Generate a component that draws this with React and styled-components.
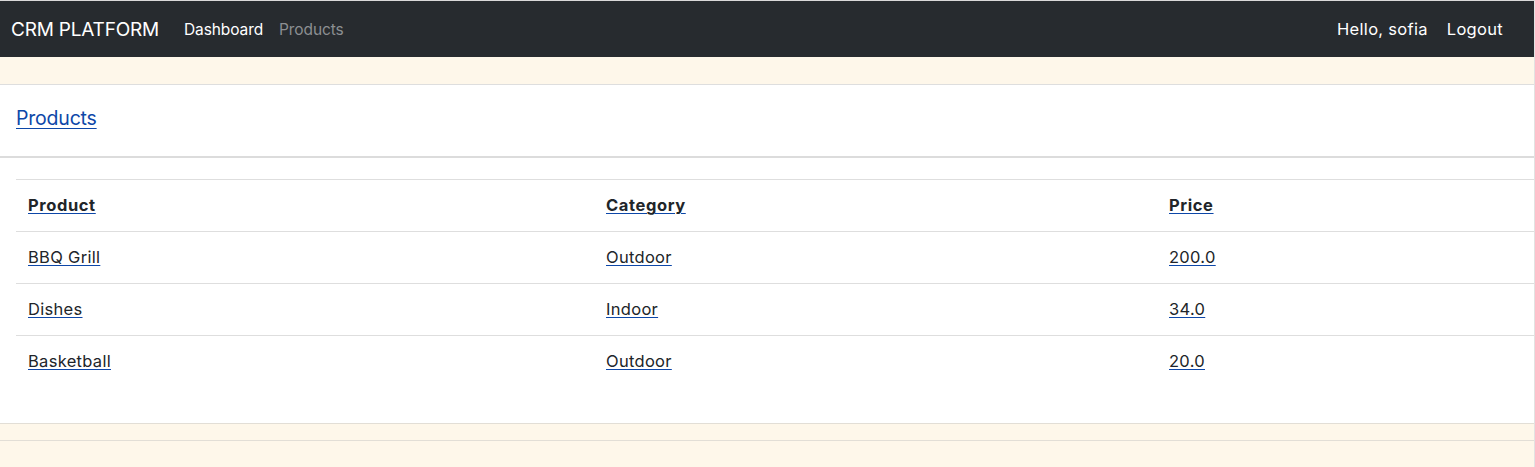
import React from "react";
import styled, { createGlobalStyle } from "styled-components";

const GlobalStyle = createGlobalStyle`
  html, body {
    margin: 0;
    padding: 0;
    background: #fef7ea;
  }
  body {
    font-family: "Inter", "Liberation Sans", sans-serif;
    font-size: 16px;
    color: #212529;
  }
  * {
    box-sizing: border-box;
  }
`;

const Page = styled.div`
  min-height: 467px;
  border-top: 1px solid #d9d9d9;
  border-right: 1px solid #e2e2e2;
  background: #fef7ea;
`;

const Navbar = styled.nav`
  height: 56px;
  background: #272b2f;
  display: flex;
  align-items: center;
  padding: 0 31px 0 11px;
`;

const Brand = styled.a`
  font-size: 19px;
  color: #ffffff;
  text-decoration: none;
  margin-right: 25px;
  letter-spacing: -0.2px;
`;

const NavLinks = styled.div`
  display: flex;
  gap: 16px;
  flex: 1;
`;

const NavLink = styled.a`
  font-size: ${(p) => (p.$user ? "16.5px" : "15.5px")};
  color: ${(p) => (p.$muted ? "#8c8f92" : "#ffffff")};
  text-decoration: none;
  letter-spacing: ${(p) => (p.$user ? "0.3px" : "-0.1px")};
`;

const UserArea = styled.div`
  display: flex;
  gap: 19px;
`;

const Spacer = styled.div`
  height: 27px;
`;

const Card = styled.section`
  background: #ffffff;
  border-top: 1px solid #dedede;
  border-bottom: 1px solid #e2ded6;
`;

const CardHeader = styled.header`
  height: 73px;
  display: flex;
  align-items: center;
  padding: 0 16px 6px;
  border-bottom: 2px solid #dcdcdc;
`;

const HeaderLink = styled.a`
  font-size: 19.5px;
  color: #0d47a8;
  text-decoration: underline;
  text-underline-offset: 3px;
  letter-spacing: -0.2px;
`;

const CardBody = styled.div`
  padding: 21px 0 35px 16px;
`;

const Table = styled.table`
  width: 100%;
  border-collapse: collapse;
  border-top: 1px solid #dedede;
`;

const Cell = styled.td`
  height: 52px;
  padding: 0 12px 1px;
  vertical-align: middle;
  text-align: left;
  font-size: 16.5px;
  letter-spacing: 0.3px;
  border-bottom: ${(p) => (p.$last ? "none" : "1px solid #dedede")};
  width: ${(p) => p.$width || "auto"};
`;

const HeadCell = styled(Cell).attrs({ as: "th" })`
  font-weight: 700;
  letter-spacing: 0.6px;
`;

const CellLink = styled.a`
  color: #212529;
  text-decoration: underline;
  text-decoration-color: #0d47a8;
  text-decoration-thickness: 1px;
  text-underline-offset: 2px;
`;

const Footer = styled.div`
  height: 17px;
  border-bottom: 1px solid #e2ded6;
`;

const products = [
  { name: "BBQ Grill", category: "Outdoor", price: "200.0" },
  { name: "Dishes", category: "Indoor", price: "34.0" },
  { name: "Basketball", category: "Outdoor", price: "20.0" },
];

export default function App() {
  return (
    <Page>
      <GlobalStyle />
      <Navbar>
        <Brand href="#">CRM PLATFORM</Brand>
        <NavLinks>
          <NavLink href="#">Dashboard</NavLink>
          <NavLink href="#" $muted>
            Products
          </NavLink>
        </NavLinks>
        <UserArea>
          <NavLink href="#" $user>
            Hello, sofia
          </NavLink>
          <NavLink href="#" $user>
            Logout
          </NavLink>
        </UserArea>
      </Navbar>
      <Spacer />
      <Card>
        <CardHeader>
          <HeaderLink href="#">Products</HeaderLink>
        </CardHeader>
        <CardBody>
          <Table>
            <thead>
              <tr>
                <HeadCell $width="578px">
                  <CellLink href="#">Product</CellLink>
                </HeadCell>
                <HeadCell $width="563px">
                  <CellLink href="#">Category</CellLink>
                </HeadCell>
                <HeadCell>
                  <CellLink href="#">Price</CellLink>
                </HeadCell>
              </tr>
            </thead>
            <tbody>
              {products.map((item, index) => (
                <tr key={item.name}>
                  <Cell $last={index === products.length - 1}>
                    <CellLink href="#">{item.name}</CellLink>
                  </Cell>
                  <Cell $last={index === products.length - 1}>
                    <CellLink href="#">{item.category}</CellLink>
                  </Cell>
                  <Cell $last={index === products.length - 1}>
                    <CellLink href="#">{item.price}</CellLink>
                  </Cell>
                </tr>
              ))}
            </tbody>
          </Table>
        </CardBody>
      </Card>
      <Footer />
    </Page>
  );
}
